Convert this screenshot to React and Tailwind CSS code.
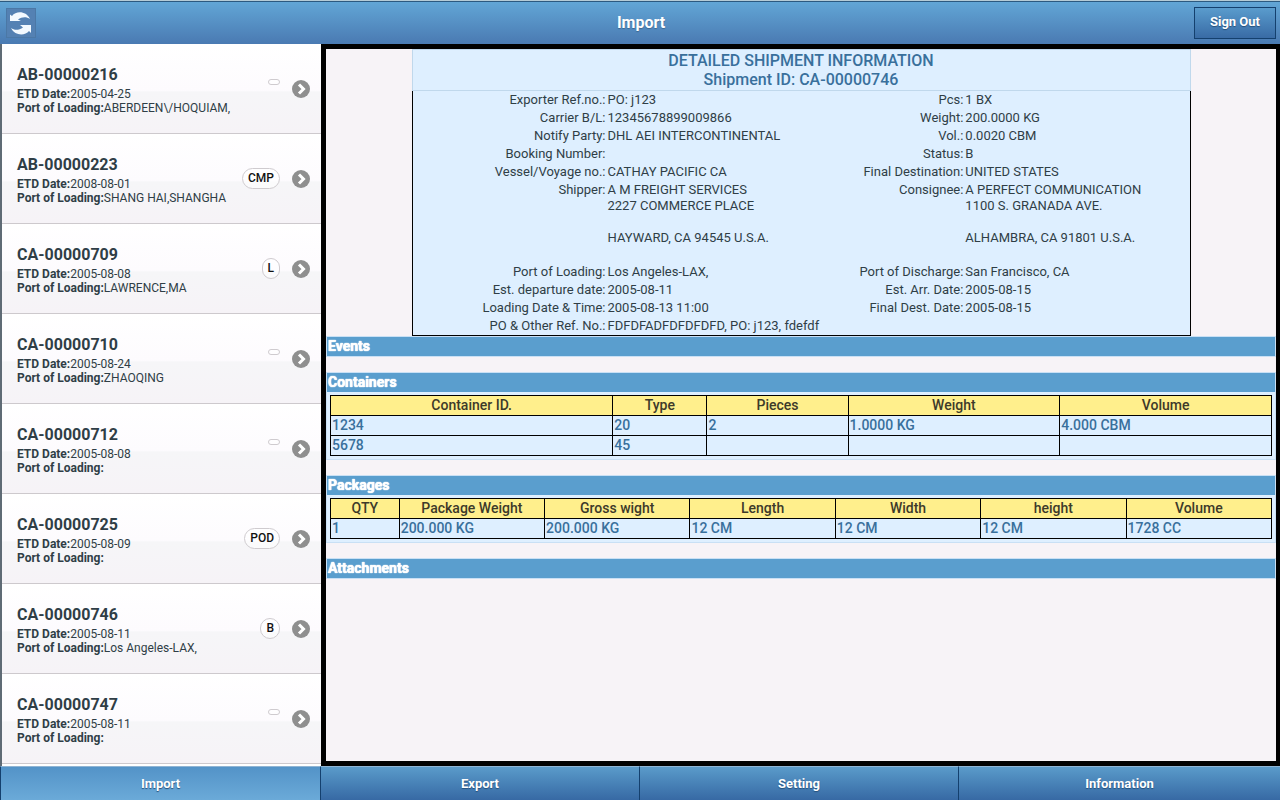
import React, { useState } from 'react';

const shipments = [
    { id: 'AB-00000216', etd: '2005-04-25', port: 'ABERDEEN\\/HOQUIAM,', status: '' },
    { id: 'AB-00000223', etd: '2008-08-01', port: 'SHANG HAI,SHANGHA', status: 'CMP' },
    { id: 'CA-00000709', etd: '2005-08-08', port: 'LAWRENCE,MA', status: 'L' },
    { id: 'CA-00000710', etd: '2005-08-24', port: 'ZHAOQING', status: '' },
    { id: 'CA-00000712', etd: '2005-08-08', port: '', status: '' },
    { id: 'CA-00000725', etd: '2005-08-09', port: '', status: 'POD' },
    { id: 'CA-00000746', etd: '2005-08-11', port: 'Los Angeles-LAX,', status: 'B' },
    { id: 'CA-00000747', etd: '2005-08-11', port: '', status: '' },
];

const details = [
    ['Exporter Ref.no.:', 'PO: j123', 'Pcs:', '1 BX'],
    ['Carrier B/L:', '12345678899009866', 'Weight:', '200.0000 KG'],
    ['Notify Party:', 'DHL AEI INTERCONTINENTAL', 'Vol.:', '0.0020 CBM'],
    ['Booking Number:', '', 'Status:', 'B'],
    ['Vessel/Voyage no.:', 'CATHAY PACIFIC CA', 'Final Destination:', 'UNITED STATES'],
    [
        'Shipper:',
        'A M FREIGHT SERVICES\n2227 COMMERCE PLACE\n\nHAYWARD, CA 94545 U.S.A.\n\n',
        'Consignee:',
        'A PERFECT COMMUNICATION\n1100 S. GRANADA AVE.\n\nALHAMBRA, CA 91801 U.S.A.\n\n',
    ],
    ['Port of Loading:', 'Los Angeles-LAX,', 'Port of Discharge:', 'San Francisco, CA'],
    ['Est. departure date:', '2005-08-11', 'Est. Arr. Date:', '2005-08-15'],
    ['Loading Date & Time:', '2005-08-13 11:00', 'Final Dest. Date:', '2005-08-15'],
];

const containers = {
    columns: [
        { label: 'Container ID.', width: '30%' },
        { label: 'Type', width: '10%' },
        { label: 'Pieces', width: '15%' },
        { label: 'Weight', width: '22.5%' },
        { label: 'Volume', width: '22.5%' },
    ],
    rows: [
        ['1234', '20', '2', '1.0000 KG', '4.000 CBM'],
        ['5678', '45', '', '', ''],
    ],
};

const packages = {
    columns: [
        { label: 'QTY', width: '7.3%' },
        { label: 'Package Weight', width: '15.45%' },
        { label: 'Gross wight', width: '15.45%' },
        { label: 'Length', width: '15.45%' },
        { label: 'Width', width: '15.45%' },
        { label: 'height', width: '15.45%' },
        { label: 'Volume', width: '15.45%' },
    ],
    rows: [['1', '200.000 KG', '200.000 KG', '12 CM', '12 CM', '12 CM', '1728 CC']],
};

const tabs = ['Import', 'Export', 'Setting', 'Information'];

const RefreshIcon = () => (
    <svg width="28" height="28" viewBox="0 0 28 28" fill="#f2f9ff" aria-hidden="true">
        <path d="M3 5.500 L5 7 C9 1.800 19 1.600 23 10 C19.500 7.600 15 7.600 11 10.500 L14 12 L3 12 Z" />
        <path d="M24 24 L22 22 C18 27 8 27 4 19 C7.500 21.600 12 21.400 16 18.400 L13 16 L24 16 Z" />
    </svg>
);

const ArrowIcon = () => (
    <svg className="shrink-0" width="18" height="18" viewBox="0 0 18 18" aria-hidden="true">
        <circle cx="9" cy="9" r="9" fill="#8f8f8f" />
        <path d="M7 4.500 L11.500 9 L7 13.500" fill="none" stroke="#fff" strokeWidth="3" />
    </svg>
);

const Section = ({ title, children }) => (
    <section className="border border-[#c9e0f5] bg-[#deefff]">
        <h2 className="h-[19px] bg-[#5a9ece] px-px text-sm leading-[19px] font-bold text-white [text-shadow:0_0_1px_#fff,0_0_1px_#fff]">
            {title}
        </h2>
        {children}
    </section>
);

const DataTable = ({ label, columns, rows }) => (
    <div className="p-[3px]">
        <table aria-label={label} className="w-full table-fixed border-collapse text-sm leading-[19px]">
            <thead>
                <tr className="bg-[#ffef8c] text-[#3d3a2a]">
                    {columns.map((col) => (
                        <th key={col.label} style={{ width: col.width }} className="border border-black p-0 font-medium">
                            {col.label}
                        </th>
                    ))}
                </tr>
            </thead>
            <tbody>
                {rows.map((row) => (
                    <tr key={row[0]} className="h-5 text-[#39709c]">
                        {row.map((cell, i) => (
                            <td key={i} className="border border-black px-px py-0 font-medium">{cell}</td>
                        ))}
                    </tr>
                ))}
            </tbody>
        </table>
    </div>
);

const App = () => {
    const [activeTab, setActiveTab] = useState('Import');

    return (
        <div className="flex h-screen flex-col bg-black font-['Roboto','Liberation_Sans',sans-serif] text-[#2f3e46]">
            {/* Top bar */}
            <div className="h-px shrink-0 bg-[#b5cbd6]"></div>
            <header className="grid h-[43px] shrink-0 grid-cols-[1fr_auto_1fr] items-center border-t border-[#2c5a80] bg-linear-to-b from-[#62a6d6] to-[#4a7ab2] pr-1 pl-[6px] text-white">
                <button
                    type="button"
                    aria-label="Refresh"
                    className="flex size-[30px] items-center justify-center border border-[#4b78a6] bg-[#5481b3]"
                >
                    <RefreshIcon />
                </button>
                <h1 className="text-base leading-5 font-bold [text-shadow:0_1px_1px_#3e6790]">Import</h1>
                <button
                    type="button"
                    className="h-8 w-[82px] justify-self-end border border-[#14406e] bg-linear-to-b from-[#5a9ccd] to-[#396ba5] pb-0.5 text-[13px] font-bold [text-shadow:0_1px_1px_#254f7a]"
                >
                    Sign Out
                </button>
            </header>

            <div className="flex min-h-0 flex-1">
                {/* Shipment list */}
                <ul className="w-[321px] shrink-0 overflow-y-auto border-l-2 border-[#5f6b75] bg-white">
                    {shipments.map((item) => (
                        <li key={item.id} className="border-b border-[#cdc9cd]">
                            <a
                                href={`#${item.id}`}
                                className="flex h-[89px] bg-linear-[to_bottom,#fff_0%,#fdfbfe_52%,#f6f6f8_54%,#f6f3f7_100%] pr-[11px] pl-[15px]"
                            >
                                <div className="min-w-0 flex-1 pt-[21px] text-xs leading-[14px]">
                                    <h3 className="mb-0.5 text-base leading-5 font-bold">{item.id}</h3>
                                    <p><strong className="font-bold">ETD Date:</strong>{item.etd}</p>
                                    <p className="truncate"><strong className="font-bold">Port of Loading:</strong>{item.port}</p>
                                </div>
                                <span className="mt-[34px] mr-3 self-start rounded-full border border-[#cfcbcf] bg-white/60 px-[5px] py-0.5 text-xs leading-[15px] font-medium text-[#111] empty:mt-[35px]">
                                    {item.status}
                                </span>
                                <div className="flex items-center"><ArrowIcon /></div>
                            </a>
                        </li>
                    ))}
                </ul>

                {/* Shipment details */}
                <main className="min-w-0 flex-1 overflow-y-auto border-y-5 border-r-4 border-l-5 border-black bg-[#f7f3f7]">
                    <div className="mx-auto w-[82%] bg-[#deefff]">
                        <h2 className="border border-[#c0d8ec] py-px text-center text-base leading-[19px] font-medium text-[#39709c]">
                            DETAILED SHIPMENT INFORMATION
                            <br />
                            Shipment ID: CA-00000746
                        </h2>
                        <table aria-label="Detailed shipment information" className="w-full table-fixed border border-t-0 border-black text-[13px] leading-4">
                            <tbody>
                                {details.map(([label, value, label2, value2]) => (
                                    <tr key={label} className="align-top">
                                        <th scope="row" className="w-1/4 p-px text-right font-normal">{label}</th>
                                        <td className="w-[28%] p-px whitespace-pre-line">{value}</td>
                                        <th scope="row" className="w-[18%] p-px text-right font-normal">{label2}</th>
                                        <td className="w-[29%] p-px whitespace-pre-line">{value2}</td>
                                    </tr>
                                ))}
                                <tr>
                                    <th scope="row" className="p-px text-right font-normal">PO &amp; Other Ref. No.:</th>
                                    <td colSpan={3} className="p-px">FDFDFADFDFDFDFD, PO: j123, fdefdf</td>
                                </tr>
                            </tbody>
                        </table>
                    </div>
                    <div className="flex flex-col gap-[15px]">
                        <Section title="Events" />
                        <Section title="Containers">
                            <DataTable label="Containers" {...containers} />
                        </Section>
                        <Section title="Packages">
                            <DataTable label="Packages" {...packages} />
                        </Section>
                        <Section title="Attachments" />
                    </div>
                </main>
            </div>

            {/* Bottom tabs */}
            <nav className="grid h-[34px] shrink-0 grid-cols-[320fr_319fr_319fr_322fr]">
                {tabs.map((tab) => (
                    <button
                        key={tab}
                        type="button"
                        onClick={() => setActiveTab(tab)}
                        className={`border-t border-l border-t-[#8fb4d4] border-l-[#14406e] bg-linear-to-b text-[13px] font-bold text-white [text-shadow:0_1px_1px_#254f7a] ${
                            tab === activeTab ? 'from-[#5393c8] to-[#6baad8]' : 'from-[#5a9bca] to-[#3769a4]'
                        }`}
                    >
                        {tab}
                    </button>
                ))}
            </nav>
        </div>
    );
};

export default App;
